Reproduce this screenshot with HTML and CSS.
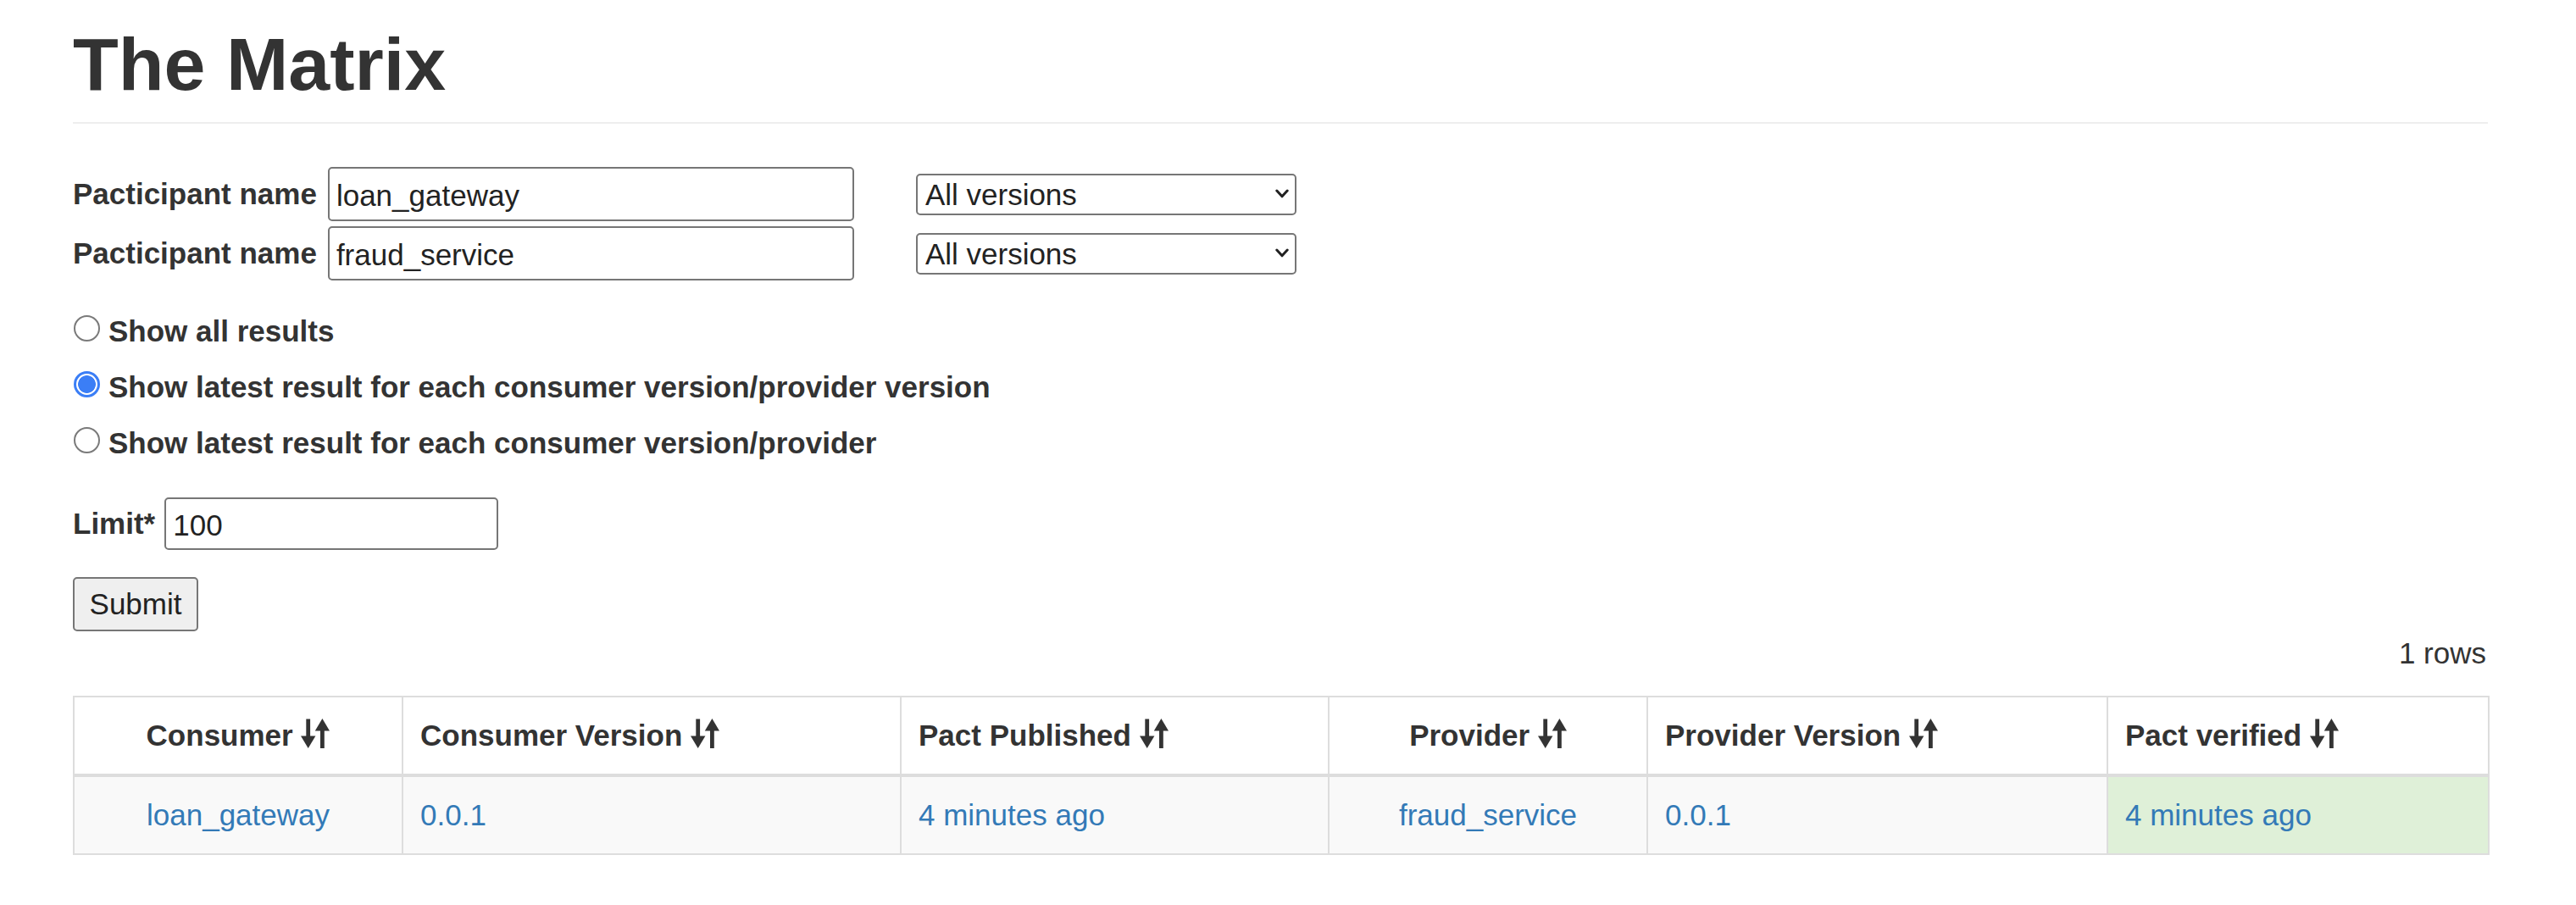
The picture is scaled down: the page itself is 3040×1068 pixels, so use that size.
FILE: index.html
```html
<!DOCTYPE html>
<html lang="en">
<head>
<meta charset="utf-8">
<title>The Matrix</title>
<link rel="stylesheet" href="styles.css">
</head>
<body>
<div class="container">
  <div class="page-header">
    <h1>The Matrix</h1>
  </div>

  <form class="matrix-form">
    <div class="form-row">
      <label class="field-label">Pacticipant name</label>
      <input class="text-input name-input" type="text" value="loan_gateway">
      <span class="select-wrap">
        <select class="version-select"><option>All versions</option></select>
        <svg class="chevron" viewBox="0 0 16 12" width="16" height="12"><polyline points="1.8,2 8,8.8 14.2,2" fill="none" stroke="#222" stroke-width="3" stroke-linecap="round" stroke-linejoin="round"/></svg>
      </span>
    </div>
    <div class="form-row second">
      <label class="field-label">Pacticipant name</label>
      <input class="text-input name-input" type="text" value="fraud_service">
      <span class="select-wrap">
        <select class="version-select"><option>All versions</option></select>
        <svg class="chevron" viewBox="0 0 16 12" width="16" height="12"><polyline points="1.8,2 8,8.8 14.2,2" fill="none" stroke="#222" stroke-width="3" stroke-linecap="round" stroke-linejoin="round"/></svg>
      </span>
    </div>

    <div class="radios">
      <div class="radio-row"><input class="radio-input" type="radio" name="latest"><label class="radio-label">Show all results</label></div>
      <div class="radio-row"><input class="radio-input" type="radio" name="latest" checked><label class="radio-label">Show latest result for each consumer version/provider version</label></div>
      <div class="radio-row"><input class="radio-input" type="radio" name="latest"><label class="radio-label">Show latest result for each consumer version/provider</label></div>
    </div>

    <div class="form-row limit-row">
      <label class="field-label limit-label">Limit*</label>
      <input class="text-input limit-input" type="text" value="100">
    </div>

    <button class="submit-btn" type="button">Submit</button>
  </form>

  <div class="row-count">1 rows</div>

  <table class="matrix-table">
    <colgroup>
      <col class="c1"><col class="c2"><col class="c3"><col class="c4"><col class="c5"><col class="c6">
    </colgroup>
    <thead>
      <tr>
        <th class="center">Consumer <svg class="sort" viewBox="0 0 34 35" width="34" height="35"><rect x="6.3" y="0.5" width="4.8" height="22"/><polygon points="0,20.5 17.4,20.5 8.7,35"/><polygon points="16.8,14.5 34,14.5 25.4,0"/><rect x="23" y="12" width="4.8" height="23"/></svg></th>
        <th>Consumer Version <svg class="sort" viewBox="0 0 34 35" width="34" height="35"><rect x="6.3" y="0.5" width="4.8" height="22"/><polygon points="0,20.5 17.4,20.5 8.7,35"/><polygon points="16.8,14.5 34,14.5 25.4,0"/><rect x="23" y="12" width="4.8" height="23"/></svg></th>
        <th>Pact Published <svg class="sort" viewBox="0 0 34 35" width="34" height="35"><rect x="6.3" y="0.5" width="4.8" height="22"/><polygon points="0,20.5 17.4,20.5 8.7,35"/><polygon points="16.8,14.5 34,14.5 25.4,0"/><rect x="23" y="12" width="4.8" height="23"/></svg></th>
        <th class="center">Provider <svg class="sort" viewBox="0 0 34 35" width="34" height="35"><rect x="6.3" y="0.5" width="4.8" height="22"/><polygon points="0,20.5 17.4,20.5 8.7,35"/><polygon points="16.8,14.5 34,14.5 25.4,0"/><rect x="23" y="12" width="4.8" height="23"/></svg></th>
        <th>Provider Version <svg class="sort" viewBox="0 0 34 35" width="34" height="35"><rect x="6.3" y="0.5" width="4.8" height="22"/><polygon points="0,20.5 17.4,20.5 8.7,35"/><polygon points="16.8,14.5 34,14.5 25.4,0"/><rect x="23" y="12" width="4.8" height="23"/></svg></th>
        <th>Pact verified <svg class="sort" viewBox="0 0 34 35" width="34" height="35"><rect x="6.3" y="0.5" width="4.8" height="22"/><polygon points="0,20.5 17.4,20.5 8.7,35"/><polygon points="16.8,14.5 34,14.5 25.4,0"/><rect x="23" y="12" width="4.8" height="23"/></svg></th>
      </tr>
    </thead>
    <tbody>
      <tr>
        <td class="center"><a href="#">loan_gateway</a></td>
        <td><a href="#">0.0.1</a></td>
        <td><a href="#">4 minutes ago</a></td>
        <td class="center"><a href="#">fraud_service</a></td>
        <td><a href="#">0.0.1</a></td>
        <td class="success"><a href="#">4 minutes ago</a></td>
      </tr>
    </tbody>
  </table>
</div>
</body>
</html>
```

FILE: styles.css
```css
html, body {
  margin: 0;
  padding: 0;
  background: #fff;
}

body {
  font-family: "Liberation Sans", Arial, Helvetica, sans-serif;
  font-size: 35px;
  line-height: 50px;
  color: #333;
}

.container {
  width: 2850px;
  margin-left: 86px;
  padding-top: 26px;
}

.page-header {
  padding-bottom: 19px;
  border-bottom: 2px solid #eee;
}

.page-header h1 {
  margin: 0;
  font-size: 88px;
  line-height: 99px;
  font-weight: bold;
  color: #333;
}

.matrix-form {
  margin: 51px 0 0;
}

.form-row {
  display: flex;
  align-items: center;
  height: 64px;
}

.form-row.second {
  margin-top: 6px;
}

.field-label {
  font-weight: bold;
  margin-right: 13px;
  white-space: nowrap;
}

.text-input {
  box-sizing: border-box;
  height: 64px;
  border: 2px solid #767676;
  border-radius: 5px;
  padding: 3px 8px 0;
  font-family: "Liberation Sans", Arial, Helvetica, sans-serif;
  font-size: 35px;
  color: #222;
  background: #fff;
  outline: none;
}

.name-input {
  width: 621px;
}

.select-wrap {
  position: relative;
  display: inline-flex;
  margin-left: 73px;
}

.version-select {
  -webkit-appearance: none;
  appearance: none;
  box-sizing: border-box;
  width: 449px;
  height: 49px;
  border: 2px solid #767676;
  border-radius: 5px;
  padding: 0 0 0 9px;
  font-family: "Liberation Sans", Arial, Helvetica, sans-serif;
  font-size: 35px;
  line-height: 45px;
  color: #222;
  background: #fff;
  outline: none;
}

.chevron {
  position: absolute;
  right: 9px;
  top: 18px;
  pointer-events: none;
}

.radios {
  display: flex;
  flex-direction: column;
  gap: 16px;
  margin-top: 35px;
}

.radio-row {
  height: 50px;
  white-space: nowrap;
}

.radio-input {
  -webkit-appearance: none;
  appearance: none;
  box-sizing: border-box;
  width: 31px;
  height: 31px;
  margin: 0 10px 0 1px;
  border: 2px solid #7a7a7a;
  border-radius: 50%;
  background: #fff;
  vertical-align: baseline;
  outline: none;
}

.radio-input:checked {
  border: 3px solid #3b7ef6;
  background: radial-gradient(circle closest-side, #3b7ef6 0, #3b7ef6 80%, #fff 86%);
}

.radio-label {
  font-weight: bold;
}

.limit-row {
  height: 62px;
  margin-top: 39px;
}

.limit-label {
  margin-right: 11px;
}

.limit-input {
  width: 394px;
  height: 62px;
}

.submit-btn {
  display: block;
  box-sizing: border-box;
  width: 148px;
  height: 64px;
  margin-top: 32px;
  padding: 0;
  border: 2px solid #767676;
  border-radius: 5px;
  background: #efefef;
  font-family: "Liberation Sans", Arial, Helvetica, sans-serif;
  font-size: 35px;
  color: #222;
}

.row-count {
  margin-top: 1px;
  text-align: right;
  padding-right: 2px;
}

.matrix-table {
  margin-top: 25px;
  width: 2850px;
  table-layout: fixed;
  border-collapse: collapse;
  border: 2px solid #ddd;
}

.c1 { width: 388px; }
.c2 { width: 588px; }
.c3 { width: 505px; }
.c4 { width: 376px; }
.c5 { width: 543px; }
.c6 { width: 450px; }

.matrix-table th,
.matrix-table td {
  border: 2px solid #ddd;
  padding: 20px;
  line-height: 50px;
  text-align: left;
  vertical-align: top;
  white-space: nowrap;
}

.matrix-table th {
  font-weight: bold;
  background: #fff;
  border-bottom: 4px solid #ddd;
}

.matrix-table td {
  background: #f9f9f9;
}

.matrix-table td.success {
  background: #dff0d8;
}

.matrix-table .center {
  text-align: center;
}

.matrix-table a {
  color: #337ab7;
  text-decoration: none;
}

.sort {
  vertical-align: -3px;
  fill: #333;
}
```
